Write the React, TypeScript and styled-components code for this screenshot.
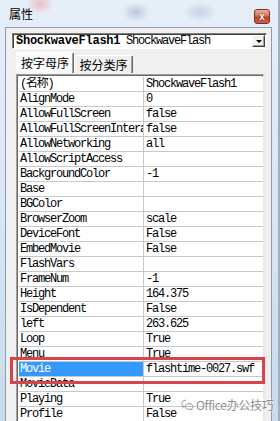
import React from "react";
import styled, { createGlobalStyle } from "styled-components";

const Global = createGlobalStyle`
  html, body { margin: 0; padding: 0; background: #c9d9eb; }
  body { width: 280px; height: 421px; overflow: hidden; }
`;

const Window = styled.div`
  position: relative;
  width: 280px;
  height: 421px;
  overflow: hidden;
  display: flex;
  flex-direction: column;
  background:
    radial-gradient(ellipse 14px 10px at 40px 4px, rgba(235, 170, 170, 0.7), transparent),
    radial-gradient(ellipse 14px 10px at 136px 12px, rgba(150, 170, 195, 0.55), transparent),
    radial-gradient(ellipse 16px 10px at 200px 12px, rgba(160, 180, 205, 0.5), transparent),
    linear-gradient(180deg, #e6eff8 0%, #d6e4f2 60%, #c9daec 100%);
  box-shadow: inset -2px 0 0 #9eb0c4;
`;

const TitleBar = styled.div`
  height: 27px;
  flex: none;
  display: flex;
  padding: 0 10px 0 9px;
`;

const Title = styled.div`
  margin-top: 6px;
  font: 12px/16px "Noto Sans CJK SC", sans-serif;
  color: #000;
`;

const CloseButton = styled.div`
  margin-left: auto;
  margin-top: 9px;
  width: 14px;
  height: 13px;
  border: 1px solid #7c2f25;
  border-radius: 3px;
  background: linear-gradient(180deg, #eab0a0 0%, #d8705a 45%, #c0402a 55%, #d0604a 100%);
  display: flex;
  align-items: center;
  justify-content: center;
  color: #fff;
  font: bold 10px/10px "Liberation Sans", sans-serif;
  text-shadow: 0 0 1px #5a1a10, 0 0 1px #5a1a10;
`;

const Body = styled.div`
  flex: 1;
  display: flex;
  padding: 0 8px 0 5px;
  min-height: 0;
`;

const Panel = styled.div`
  flex: 1;
  display: flex;
  flex-direction: column;
  background: #f0f0f0;
  border: 1px solid #8c9cb0;
  border-bottom: none;
  padding-top: 5px;
  min-width: 0;
`;

const Combo = styled.div`
  margin-left: 6px;
  width: 255px;
  height: 16px;
  box-sizing: border-box;
  display: flex;
  align-items: center;
  background: #fff;
  border-top: 1px solid #808080;
  border-left: 1px solid #808080;
  border-right: 1px solid #fff;
  border-bottom: 1px solid #fff;
  box-shadow: inset 1px 1px 0 #404040;
  padding: 0 1px 0 3px;
`;

const ComboText = styled.div`
  flex: 1;
  display: flex;
  white-space: pre;
  overflow: hidden;
  font: 12px/14px "Liberation Mono", monospace;
  color: #000;
`;

const BoldName = styled.span`
  display: inline-block;
  width: 110px;
  font-weight: bold;
  letter-spacing: -0.25px;
`;

const TypeName = styled.span`
  letter-spacing: -1.2px;
`;

const DropButton = styled.div`
  width: 13px;
  height: 12px;
  box-sizing: border-box;
  background: #f0f0f0;
  border-top: 1px solid #fff;
  border-left: 1px solid #fff;
  border-right: 1px solid #404040;
  border-bottom: 1px solid #404040;
  box-shadow: inset -1px -1px 0 #a0a0a0;
  display: flex;
  align-items: center;
  justify-content: center;
`;

const Arrow = styled.div`
  width: 0;
  height: 0;
  border-left: 3px solid transparent;
  border-right: 3px solid transparent;
  border-top: 3px solid #000;
`;

const Tabs = styled.div`
  margin-top: 3px;
  margin-left: 10px;
  height: 21px;
  display: flex;
  align-items: flex-end;
`;

const Tab = styled.div<{ $active?: boolean }>`
  box-sizing: border-box;
  width: ${(p) => (p.$active ? 58 : 59)}px;
  height: ${(p) => (p.$active ? 21 : 18)}px;
  background: ${(p) => (p.$active ? "#fafafa" : "#f0f0f0")};
  border-top: 1px solid #fff;
  border-left: 1px solid #fff;
  border-right: 1px solid #696969;
  box-shadow: inset -1px 0 0 #a0a0a0;
  border-radius: 2px 2px 0 0;
  display: flex;
  align-items: center;
  justify-content: center;
  font: 12px/14px "Noto Sans CJK SC", sans-serif;
  color: #000;
  padding-top: ${(p) => (p.$active ? 0 : 1)}px;
`;

const GridFrame = styled.div`
  margin-top: 1px;
  margin-left: 10px;
  width: 249px;
  box-sizing: border-box;
  flex: 1;
  background: #fff;
  border-top: 1px solid #a0a0a0;
  border-left: 1px solid #a0a0a0;
  border-right: 2px solid #e8e8e8;
  box-shadow: inset 1px 1px 0 #696969, inset -1px 0 0 #a0a0a0;
  padding: 2px 0 0 2px;
  display: flex;
  flex-direction: column;
`;

const Row = styled.div`
  display: flex;
  height: 15px;
  box-sizing: border-box;
  border-bottom: 1px solid #c8c8c8;
  flex: none;
`;

const Cell = styled.div<{ $name?: boolean; $selected?: boolean }>`
  box-sizing: border-box;
  width: ${(p) => (p.$name ? "125px" : "119px")};
  border-right: ${(p) => (p.$name ? "1px solid #c8c8c8" : "none")};
  padding-left: ${(p) => (p.$name ? 1 : 2)}px;
  background: ${(p) => (p.$selected ? "#3399ff" : "#fff")};
  color: ${(p) => (p.$selected ? "#fff" : "#000")};
  white-space: nowrap;
  overflow: hidden;
  font: 12px/14px "Liberation Mono", "Noto Sans CJK SC", monospace;
  letter-spacing: -1.2px;
`;

const Highlight = styled.div`
  position: absolute;
  left: 10px;
  top: 357px;
  width: 255px;
  height: 27px;
  box-sizing: border-box;
  border: 3px solid #d8434c;
  pointer-events: none;
`;

const Watermark = styled.div`
  position: absolute;
  left: 181px;
  top: 398px;
  display: flex;
  align-items: center;
  gap: 2px;
  color: rgba(120, 120, 120, 0.85);
  font: 12px/14px "Noto Sans CJK SC", sans-serif;
  letter-spacing: -0.3px;
  text-shadow: 0 0 2px #fff, 0 0 2px #fff;
  pointer-events: none;
`;

const rows: [string, string][] = [
  ["(名称)", "ShockwaveFlash1"],
  ["AlignMode", "0"],
  ["AllowFullScreen", "false"],
  ["AllowFullScreenInteractive", "false"],
  ["AllowNetworking", "all"],
  ["AllowScriptAccess", ""],
  ["BackgroundColor", "-1"],
  ["Base", ""],
  ["BGColor", ""],
  ["BrowserZoom", "scale"],
  ["DeviceFont", "False"],
  ["EmbedMovie", "False"],
  ["FlashVars", ""],
  ["FrameNum", "-1"],
  ["Height", "164.375"],
  ["IsDependent", "False"],
  ["left", "263.625"],
  ["Loop", "True"],
  ["Menu", "True"],
  ["Movie", "flashtime-0027.swf"],
  ["MovieData", ""],
  ["Playing", "True"],
  ["Profile", "False"],
];

const WeChatIcon = () => (
  <svg width="13" height="12" viewBox="0 0 13 12" fill="none" stroke="rgba(130,130,130,0.85)" strokeWidth="1">
    <path d="M5 1.2C2.6 1.2 0.8 2.7 0.8 4.5c0 1 .5 1.9 1.4 2.5L1.8 8.3l1.5-.8c.5.1 1 .2 1.7.2" />
    <path d="M8.2 4.6c2.1 0 3.8 1.3 3.8 3 0 .9-.5 1.6-1.2 2.1l.3 1.1-1.3-.6c-.5.1-1 .2-1.6.2-2.1 0-3.8-1.3-3.8-2.9s1.7-2.9 3.8-2.9z" />
  </svg>
);

export default function App() {
  return (
    <>
      <Global />
      <Window>
        <TitleBar>
          <Title>属性</Title>
          <CloseButton>x</CloseButton>
        </TitleBar>
        <Body>
          <Panel>
            <Combo>
              <ComboText>
                <BoldName>ShockwaveFlash1</BoldName>
                <TypeName>ShockwaveFlash</TypeName>
              </ComboText>
              <DropButton>
                <Arrow />
              </DropButton>
            </Combo>
            <Tabs>
              <Tab $active>按字母序</Tab>
              <Tab>按分类序</Tab>
            </Tabs>
            <GridFrame>
              {rows.map(([name, value]) => (
                <Row key={name}>
                  <Cell $name $selected={name === "Movie"}>
                    {name}
                  </Cell>
                  <Cell>{value}</Cell>
                </Row>
              ))}
            </GridFrame>
          </Panel>
        </Body>
        <Highlight />
        <Watermark>
          <WeChatIcon />
          <span>Office办公技巧</span>
        </Watermark>
      </Window>
    </>
  );
}
